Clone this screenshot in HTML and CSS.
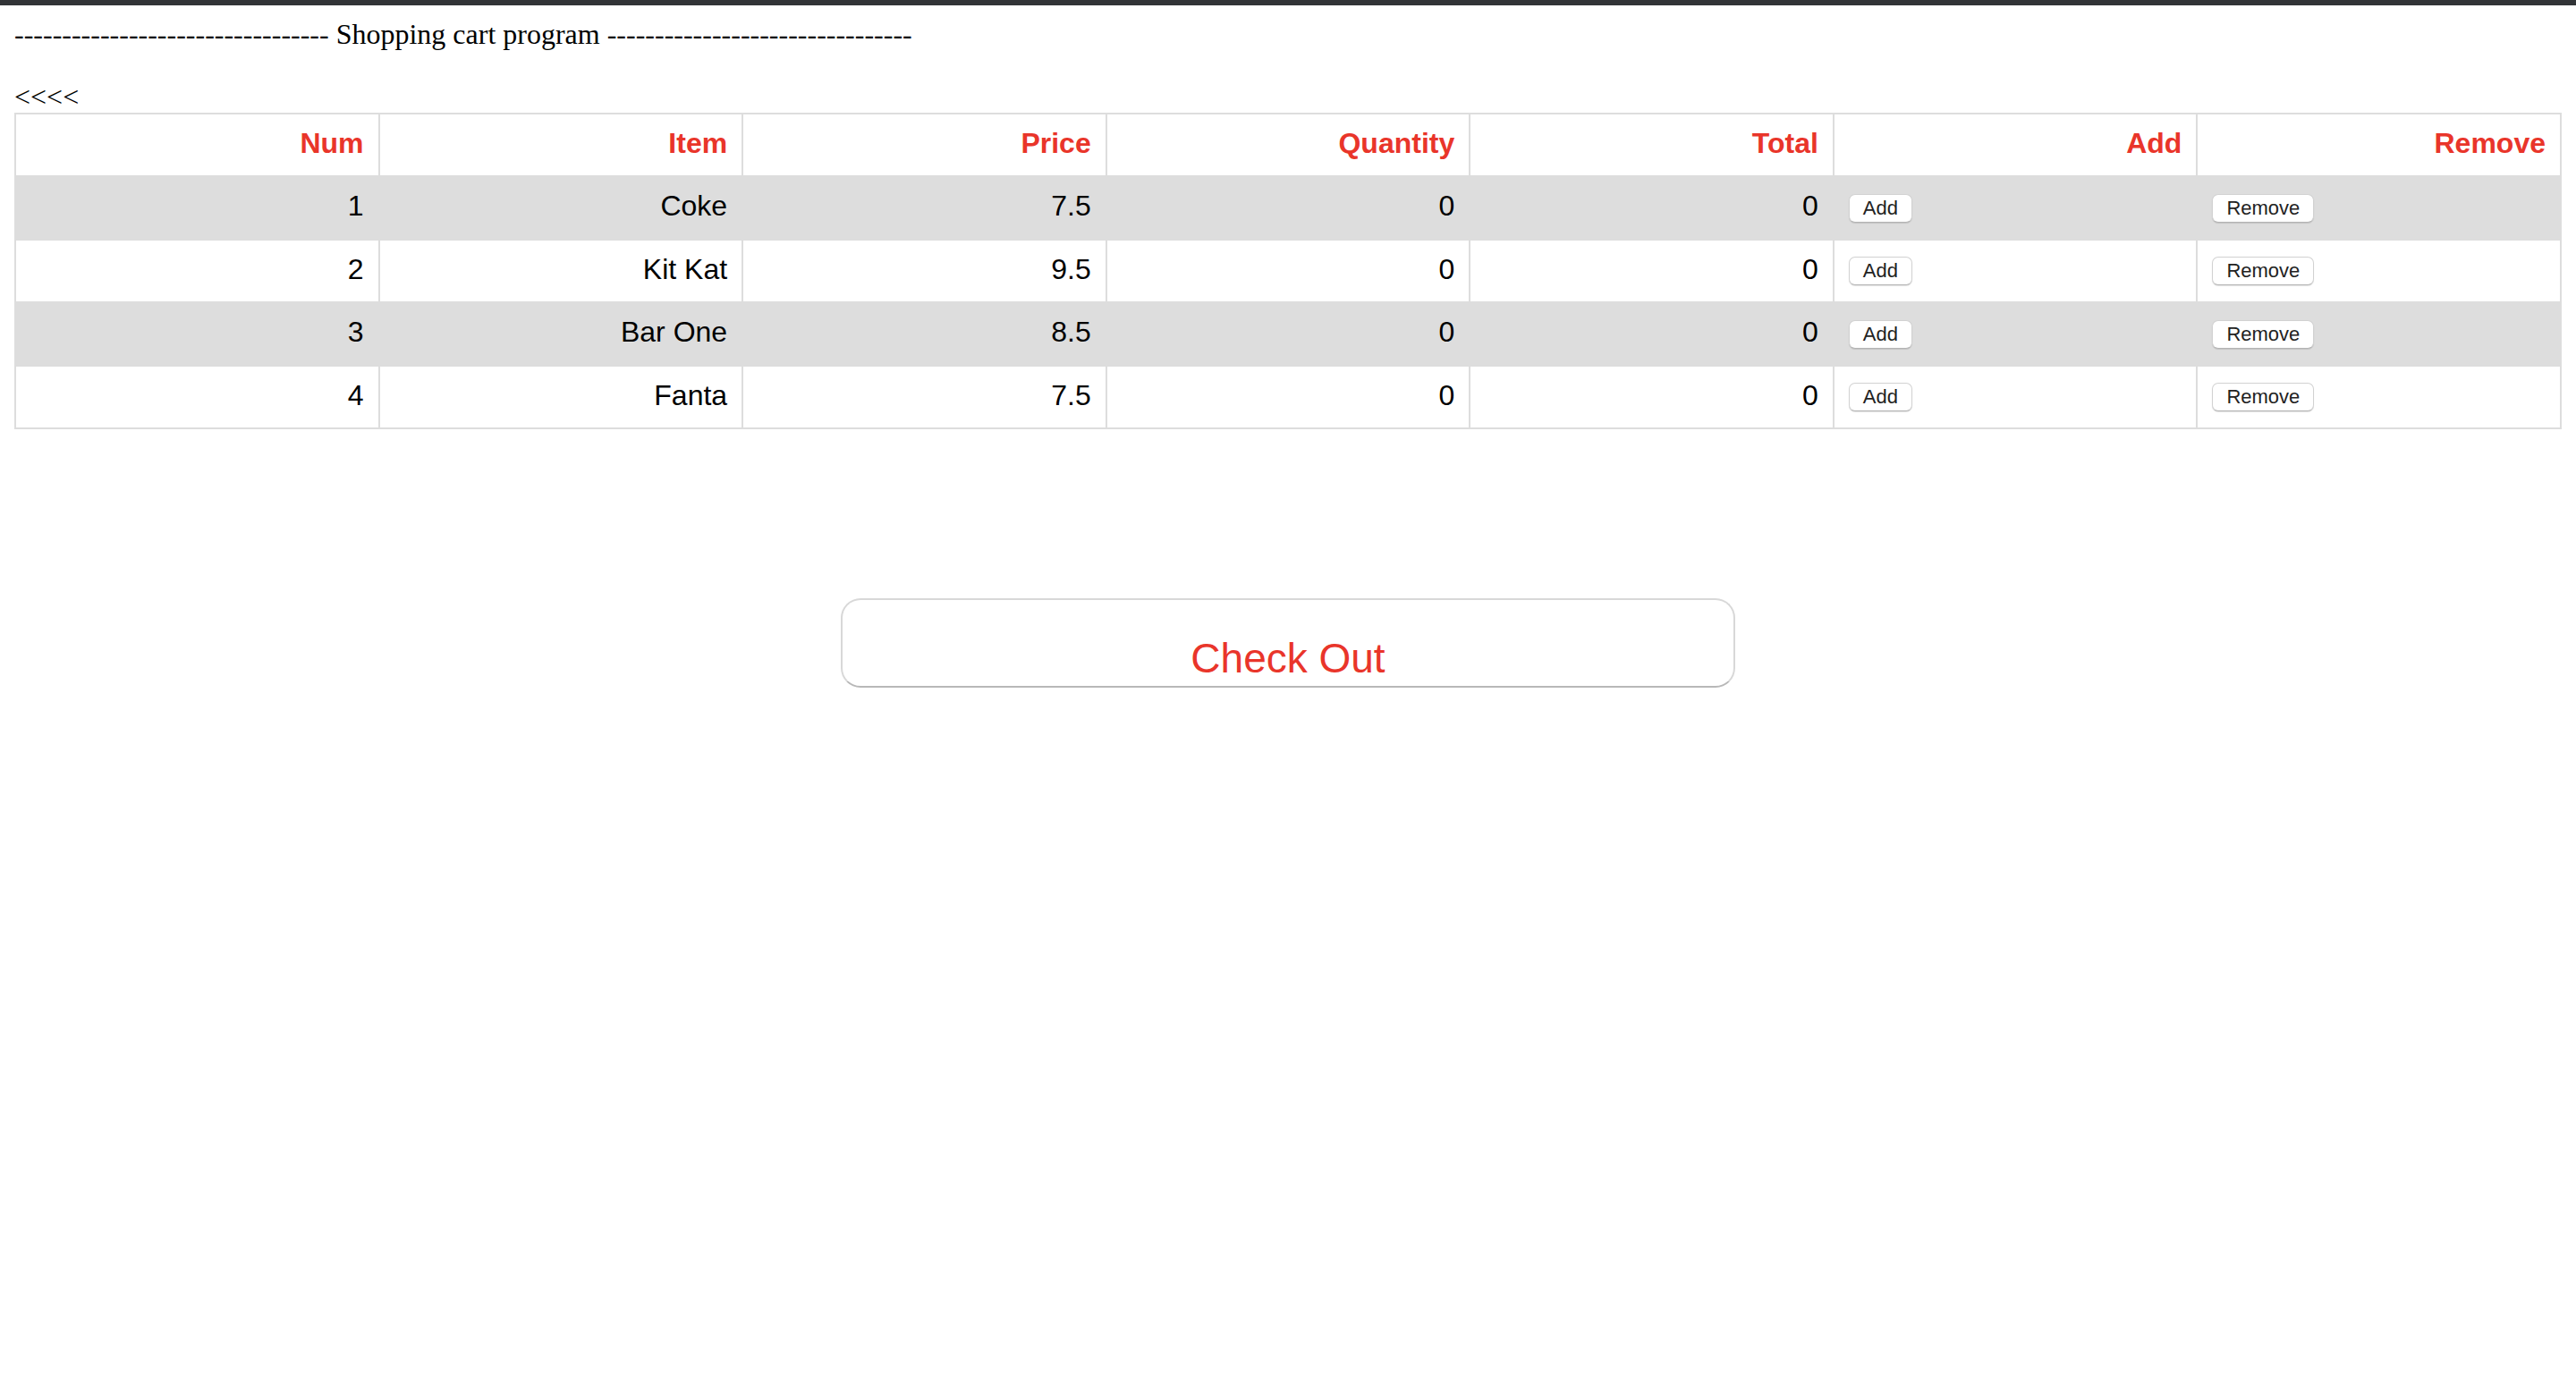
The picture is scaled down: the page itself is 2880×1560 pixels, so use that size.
FILE: index.html
```html
<!DOCTYPE html>
<html>
<head>
<meta charset="utf-8">
<title>Shopping cart program</title>
<link rel="stylesheet" href="styles.css">
</head>
<body>
<div class="topbar"></div>
<div class="page">
  <div class="title">--------------------------------- Shopping cart program --------------------------------</div>
  <div class="back">&lt;&lt;&lt;&lt;</div>
  <table class="cart">
    <thead>
      <tr>
        <th>Num</th>
        <th>Item</th>
        <th>Price</th>
        <th>Quantity</th>
        <th>Total</th>
        <th>Add</th>
        <th>Remove</th>
      </tr>
    </thead>
    <tbody>
      <tr>
        <td>1</td><td>Coke</td><td>7.5</td><td>0</td><td>0</td>
        <td class="act"><button class="small">Add</button></td>
        <td class="act"><button class="small">Remove</button></td>
      </tr>
      <tr>
        <td>2</td><td>Kit Kat</td><td>9.5</td><td>0</td><td>0</td>
        <td class="act"><button class="small">Add</button></td>
        <td class="act"><button class="small">Remove</button></td>
      </tr>
      <tr>
        <td>3</td><td>Bar One</td><td>8.5</td><td>0</td><td>0</td>
        <td class="act"><button class="small">Add</button></td>
        <td class="act"><button class="small">Remove</button></td>
      </tr>
      <tr>
        <td>4</td><td>Fanta</td><td>7.5</td><td>0</td><td>0</td>
        <td class="act"><button class="small">Add</button></td>
        <td class="act"><button class="small">Remove</button></td>
      </tr>
    </tbody>
  </table>
  <button class="checkout">Check Out</button>
</div>
</body>
</html>
```
FILE: styles.css
```css
html, body {
  margin: 0;
  padding: 0;
  background: #ffffff;
}

.topbar {
  height: 6px;
  background: #323437;
}

.page {
  padding: 14px 16px 16px;
}

.title {
  font-family: "Liberation Serif", "Times New Roman", serif;
  font-size: 32px;
  line-height: 37px;
  color: #000;
  white-space: nowrap;
}

.back {
  font-family: "Liberation Serif", "Times New Roman", serif;
  font-size: 32px;
  line-height: 35px;
  color: #000;
  margin-top: 32px;
  padding-top: 2px;
}

.cart {
  width: 100%;
  table-layout: fixed;
  border-collapse: collapse;
  border: 2px solid #dddddd;
  font-family: "Liberation Sans", Arial, sans-serif;
  font-size: 32px;
  line-height: 36px;
}

.cart th,
.cart td {
  border: 2px solid #dddddd;
  padding: 14px 16px 18px;
  text-align: right;
  vertical-align: middle;
  height: 36px;
}

.cart th {
  color: #e9352a;
  font-weight: bold;
}

.cart td {
  color: #000;
}

.cart tbody tr:nth-child(odd) {
  background: #dddddd;
}

.cart td.act {
  text-align: left;
}

.small {
  font-family: "Liberation Sans", Arial, sans-serif;
  font-size: 22px;
  line-height: 30px;
  height: 32px;
  padding: 0 15px;
  margin: 0;
  color: #222;
  background: #ffffff;
  border: 1px solid #d2d2d2;
  border-bottom-color: #b4b4b4;
  border-radius: 7px;
  box-shadow: 0 1px 1px rgba(0, 0, 0, 0.12);
  vertical-align: middle;
}

.checkout {
  display: block;
  box-sizing: border-box;
  width: 1000px;
  height: 100px;
  margin: 189px auto 0;
  padding: 39px 0 5px;
  font-family: "Liberation Sans", Arial, sans-serif;
  font-size: 46px;
  line-height: 52px;
  color: #e9352a;
  background: #ffffff;
  border: 2px solid #d8d8d8;
  border-bottom-color: #b8b8b8;
  border-radius: 22px;
}
```
